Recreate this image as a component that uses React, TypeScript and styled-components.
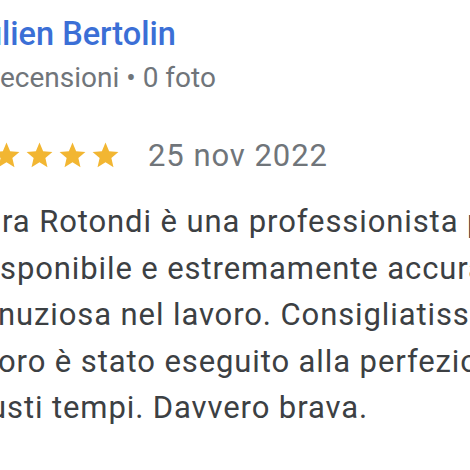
import React from 'react';
import styled, { createGlobalStyle } from 'styled-components';

const GlobalStyle = createGlobalStyle`
  html, body {
    margin: 0;
    padding: 0;
    background: #fff;
    overflow: hidden;
  }
  body {
    font-family: Roboto, "Liberation Sans", Arial, sans-serif;
    -webkit-font-smoothing: antialiased;
  }
`;

const Review = styled.article`
  width: 470px;
  height: 470px;
  overflow: hidden;
  padding-top: 14px;
  box-sizing: border-box;
`;

const Author = styled.div`
  margin-left: 2px;
  font-size: 32.5px;
  line-height: 40px;
  font-weight: 500;
  color: #3b6fd6;
  white-space: nowrap;
`;

const Meta = styled.div`
  margin-top: 7px;
  font-size: 28px;
  line-height: 34px;
  color: #70757a;
  white-space: nowrap;
`;

// zero-width box; its text spills out to the left, off the visible area
const Hidden = styled.span`
  display: inline-flex;
  width: 0;
  justify-content: flex-end;
  white-space: nowrap;
`;

const RatingRow = styled.div`
  margin-top: 44px;
  display: flex;
  align-items: center;
  height: 32px;
`;

const Stars = styled.div`
  display: flex;
  gap: 2px;
  margin-left: -42px;
`;

const Star = styled.svg`
  width: 31px;
  height: 31px;
  fill: #f2b632;
  display: block;
`;

const DateText = styled.span`
  margin-left: 27px;
  font-size: 31px;
  letter-spacing: 0.95px;
  color: #70757a;
  white-space: nowrap;
`;

const Body = styled.div`
  margin-top: 28px;
  font-size: 31px;
  letter-spacing: 0.9px;
  line-height: 46.5px;
  color: #3c4043;
`;

const Line = styled.div<{ $start: number }>`
  margin-left: ${(p) => p.$start}px;
  white-space: nowrap;
`;

const StarIcon = () => (
  <Star viewBox="0 0 24 24">
    <path d="M12 17.27L18.18 21l-1.64-7.03L22 9.24l-7.19-.61L12 2 9.19 8.63 2 9.24l5.46 4.73L5.82 21z" />
  </Star>
);

const lines: { hidden: string; text: string; start: number }[] = [
  { hidden: 'Sa', text: 'ra Rotondi è una professionista preparata,', start: 2 },
  { hidden: 'di', text: 'sponibile e estremamente accurata e', start: 0 },
  { hidden: 'mi', text: 'nuziosa nel lavoro. Consigliatissima!', start: -2 },
  { hidden: 'Il lav', text: 'oro è stato eseguito alla perfezione', start: -2 },
  { hidden: 'nei gi', text: 'usti tempi. Davvero brava.', start: -11 },
];

export default function App() {
  return (
    <>
      <GlobalStyle />
      <Review>
        <Author>
          <Hidden>Ju</Hidden>lien Bertolin
        </Author>
        <Meta>
          <Hidden>3 r</Hidden>ecensioni • 0 foto
        </Meta>
        <RatingRow>
          <Stars>
            {[0, 1, 2, 3, 4].map((i) => (
              <StarIcon key={i} />
            ))}
          </Stars>
          <DateText>25 nov 2022</DateText>
        </RatingRow>
        <Body>
          {lines.map((l) => (
            <Line key={l.text} $start={l.start}>
              <Hidden>{l.hidden}</Hidden>
              {l.text}
            </Line>
          ))}
        </Body>
      </Review>
    </>
  );
}
